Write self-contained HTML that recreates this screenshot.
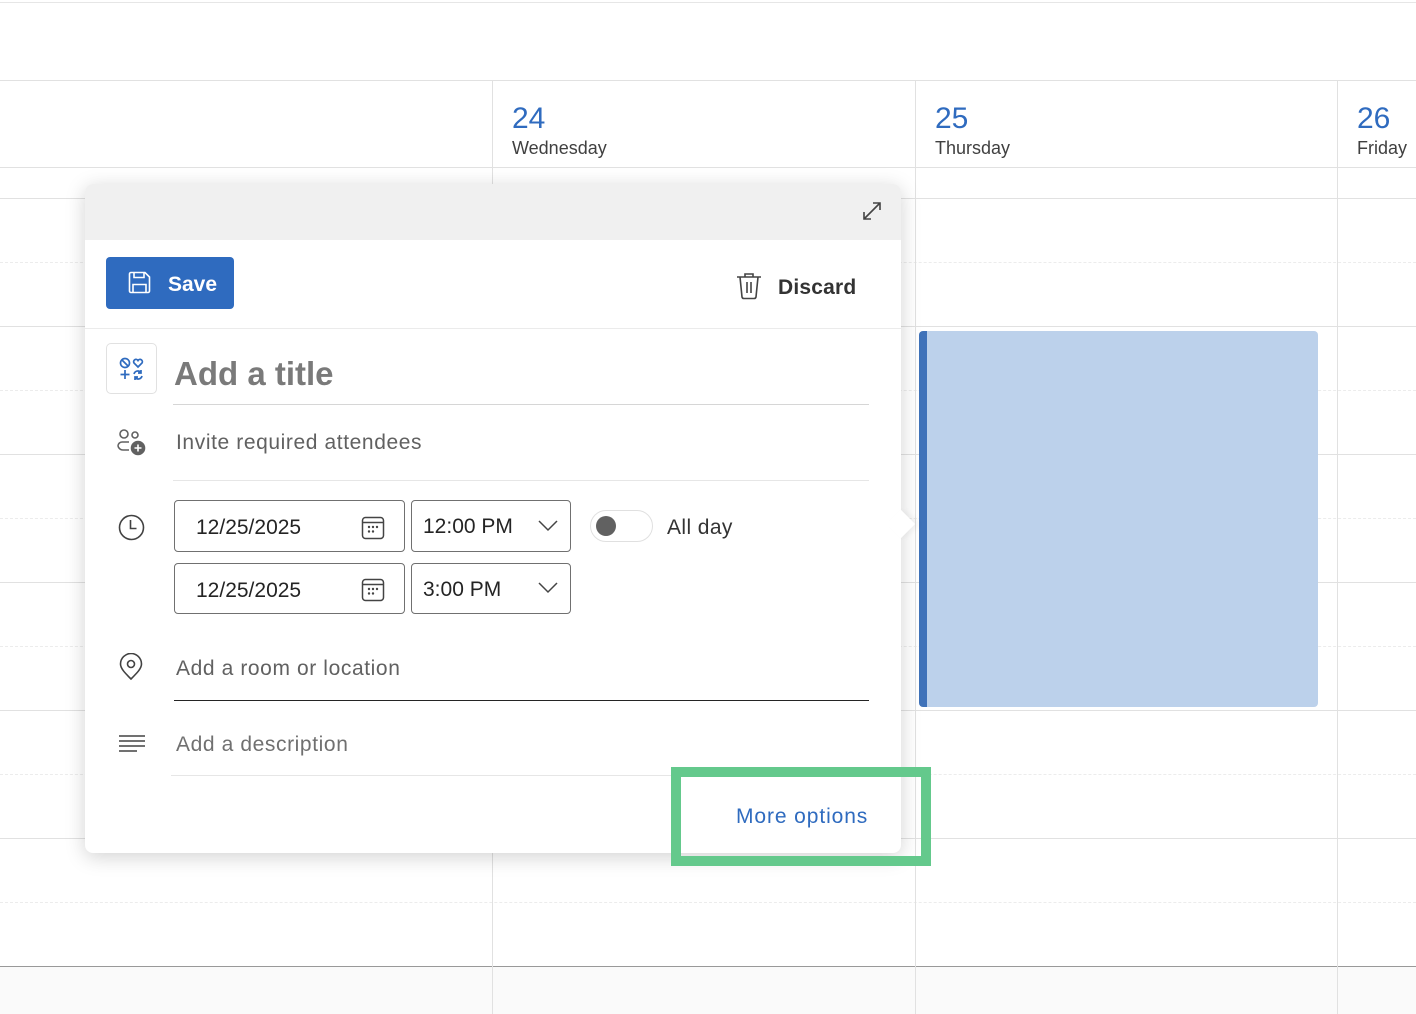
<!DOCTYPE html>
<html><head><meta charset="utf-8"><style>
*{box-sizing:border-box;margin:0;padding:0}
body{width:1416px;height:1014px;position:relative;overflow:hidden;background:#fff;font-family:"Liberation Sans",sans-serif;}
.a{position:absolute}
.hl{position:absolute;left:0;width:1416px;height:0;border-top:1px solid #e1e1e1}
.hd{position:absolute;left:0;width:1416px;height:0;border-top:1px dashed #ececec}
.vl{position:absolute;width:0;border-left:1px solid #e1e1e1}
.num{font-size:30px;color:#2f6bbf}
.day{font-size:18px;color:#404040}
.txt{color:#616161;font-size:21px;letter-spacing:0.6px}
.box{position:absolute;border:1px solid #707070;border-radius:4px;font-size:21px;color:#242424}
</style></head><body>
<div class="hl" style="top:2px;border-color:#e6e6e6"></div>
<div class="hl" style="top:80px"></div>
<div class="hl" style="top:167px"></div>
<div class="hl" style="top:198px"></div>
<div class="hd" style="top:262px"></div>
<div class="hl" style="top:326px"></div>
<div class="hd" style="top:390px"></div>
<div class="hl" style="top:454px"></div>
<div class="hd" style="top:518px"></div>
<div class="hl" style="top:582px"></div>
<div class="hd" style="top:646px"></div>
<div class="hl" style="top:710px"></div>
<div class="hd" style="top:774px"></div>
<div class="hl" style="top:838px"></div>
<div class="hd" style="top:902px"></div>
<div class="a" style="top:966px;left:0;width:1416px;height:48px;background:#fafafa;border-top:1px solid #999"></div>
<div class="vl" style="left:492px;top:80px;height:934px"></div>
<div class="vl" style="left:915px;top:80px;height:934px"></div>
<div class="vl" style="left:1337px;top:80px;height:934px"></div>
<div class="a num" style="left:512px;top:102px">24</div>
<div class="a day" style="left:512px;top:138px">Wednesday</div>
<div class="a num" style="left:935px;top:102px">25</div>
<div class="a day" style="left:935px;top:138px">Thursday</div>
<div class="a num" style="left:1357px;top:102px">26</div>
<div class="a day" style="left:1357px;top:138px">Friday</div>
<div class="a" style="left:919px;top:331px;width:399px;height:376px;background:#bcd1eb;border-left:8px solid #3f72b9;border-radius:4px"></div>

<div class="a" style="left:85px;top:184px;width:816px;height:669px;background:#fff;border-radius:8px;box-shadow:0 4px 20px rgba(0,0,0,.18)">
 <div class="a" style="left:806px;top:330px;width:20px;height:20px;background:#fff;transform:rotate(45deg);box-shadow:3px -3px 6px rgba(0,0,0,.05)"></div>
 <div class="a" style="left:0;top:0;width:816px;height:56px;background:#f0f0f0;border-radius:8px 8px 0 0"></div>
 <svg class="a" style="left:777px;top:17px" width="20" height="20" viewBox="0 0 20 20" fill="none" stroke="#444" stroke-width="1.6"><path d="M2 18L18 2M11 2h7v7M2 11v7h7"/></svg>
 <div class="a" style="left:21px;top:73px;width:128px;height:52px;background:#2f6bbf;border-radius:4px;color:#fff;font-size:21px;font-weight:bold">
  <svg class="a" style="left:22px;top:14px" width="23" height="23" viewBox="0 0 23 23" fill="none" stroke="#fff" stroke-width="1.6"><path d="M3 1.5h14l4.5 4.5v14a1.5 1.5 0 0 1-1.5 1.5H3a1.5 1.5 0 0 1-1.5-1.5V3A1.5 1.5 0 0 1 3 1.5z"/><path d="M6 1.5v5h10v-5M5 21.5v-8h13v8"/></svg>
  <span class="a" style="left:62px;top:16px">Save</span></div>
 <svg class="a" style="left:651px;top:88px" width="26" height="28" viewBox="0 0 26 28" fill="none" stroke="#444" stroke-width="1.6"><path d="M1 5h24M9 5V2h8v3M4 5l2 20a2 2 0 0 0 2 1.5h10a2 2 0 0 0 2-1.5l2-20M11 10v11M15 10v11"/></svg>
 <div class="a" style="left:693px;top:92px;font-size:21px;font-weight:bold;color:#333;letter-spacing:0.2px">Discard</div>
 <div class="a" style="left:0;top:144px;width:816px;border-top:1px solid #ebebeb"></div>
 <div class="a" style="left:21px;top:159px;width:51px;height:51px;border:1px solid #e1e1e1;border-radius:5px">
  <svg class="a" style="left:12px;top:13px" width="26" height="24" viewBox="0 0 26 24" fill="none" stroke="#2f6bbf" stroke-width="1.7"><circle cx="6" cy="6" r="4.5"/><path d="M3 3l6 6M19 10l-4-4a2.3 2.3 0 0 1 4-2.5a2.3 2.3 0 0 1 4 2.5z"/><path d="M6 13v9M1.5 17.5h9M15 17a4 4 0 0 1 7-1.5M23 19a4 4 0 0 1-7 1.5M22 13v3h-3M16 23v-3h3"/></svg></div>
 <div class="a" style="left:89px;top:171px;font-size:33px;font-weight:bold;color:#7a7a7a">Add a title</div>
 <div class="a" style="left:88px;top:220px;width:696px;border-top:1px solid #d6d6d6"></div>
 <svg class="a" style="left:32px;top:245px" width="30" height="28" viewBox="0 0 30 28" fill="none" stroke="#616161" stroke-width="1.6"><circle cx="7" cy="5" r="4"/><circle cx="18" cy="6" r="3"/><path d="M1 17a4 4 0 0 1 4-4h7M1 17a5 5 0 0 0 5 4h6"/><circle cx="21" cy="19" r="6.5" fill="#616161"/><path d="M21 15.5v7M17.5 19h7" stroke="#fff"/></svg>
 <div class="a txt" style="left:91px;top:247px">Invite required attendees</div>
 <div class="a" style="left:88px;top:296px;width:696px;border-top:1px solid #e6e6e6"></div>
 <svg class="a" style="left:33px;top:330px" width="27" height="27" viewBox="0 0 27 27" fill="none" stroke="#424242" stroke-width="1.6"><circle cx="13.5" cy="13.5" r="12"/><path d="M12.5 6v8.5h6"/></svg>
 <div class="box" style="left:89px;top:316px;width:231px;height:52px"><span class="a" style="left:21px;top:15px">12/25/2025</span>
  <svg class="a" style="left:186px;top:15px" width="24" height="24" viewBox="0 0 24 24" fill="none" stroke="#444" stroke-width="1.5"><rect x="1.5" y="1.5" width="21" height="21" rx="3"/><path d="M1.5 6.5h21"/><g fill="#444" stroke="none"><circle cx="8" cy="11" r="1.2"/><circle cx="12" cy="11" r="1.2"/><circle cx="16" cy="11" r="1.2"/><circle cx="8" cy="15.5" r="1.2"/><circle cx="12" cy="15.5" r="1.2"/></g></svg></div>
 <div class="box" style="left:326px;top:316px;width:160px;height:52px"><span class="a" style="left:11px;top:14px">12:00 PM</span>
  <svg class="a" style="left:126px;top:19px" width="20" height="12" viewBox="0 0 20 12" fill="none" stroke="#444" stroke-width="1.5"><path d="M1 1l9 9l9-9"/></svg></div>
 <div class="a" style="left:505px;top:326px;width:63px;height:32px;border:1px solid #e0e0e0;border-radius:16px"><div class="a" style="left:5px;top:5px;width:20px;height:20px;border-radius:50%;background:#616161"></div></div>
 <div class="a" style="left:582px;top:332px;font-size:21px;color:#333;letter-spacing:0.4px">All day</div>
 <div class="box" style="left:89px;top:379px;width:231px;height:51px"><span class="a" style="left:21px;top:15px">12/25/2025</span>
  <svg class="a" style="left:186px;top:14px" width="24" height="24" viewBox="0 0 24 24" fill="none" stroke="#444" stroke-width="1.5"><rect x="1.5" y="1.5" width="21" height="21" rx="3"/><path d="M1.5 6.5h21"/><g fill="#444" stroke="none"><circle cx="8" cy="11" r="1.2"/><circle cx="12" cy="11" r="1.2"/><circle cx="16" cy="11" r="1.2"/><circle cx="8" cy="15.5" r="1.2"/><circle cx="12" cy="15.5" r="1.2"/></g></svg></div>
 <div class="box" style="left:326px;top:379px;width:160px;height:51px"><span class="a" style="left:11px;top:14px">3:00 PM</span>
  <svg class="a" style="left:126px;top:18px" width="20" height="12" viewBox="0 0 20 12" fill="none" stroke="#444" stroke-width="1.5"><path d="M1 1l9 9l9-9"/></svg></div>
 <svg class="a" style="left:34px;top:469px" width="24" height="28" viewBox="0 0 24 28" fill="none" stroke="#424242" stroke-width="1.6"><path d="M12 26C6 20 1.5 15.5 1.5 11a10.5 10.5 0 0 1 21 0c0 4.5-4.5 9-10.5 15z"/><circle cx="12" cy="11" r="3.5"/></svg>
 <div class="a txt" style="left:91px;top:473px">Add a room or location</div>
 <div class="a" style="left:89px;top:516px;width:695px;border-top:1.5px solid #242424"></div>
 <svg class="a" style="left:33px;top:550px" width="28" height="18" viewBox="0 0 28 18" fill="none" stroke="#424242" stroke-width="1.5"><path d="M1 2h26M1 7h26M1 12h26M1 17h18"/></svg>
 <div class="a txt" style="left:91px;top:549px;color:#707070">Add a description</div>
 <div class="a" style="left:86px;top:591px;width:700px;border-top:1px solid #e6e6e6"></div>
 <div class="a" style="left:651px;top:621px;font-size:21px;color:#2f6bbf;letter-spacing:0.9px">More options</div>
</div>
<div class="a" style="left:671px;top:767px;width:260px;height:99px;border:10px solid #64c98c"></div>
</body></html>
